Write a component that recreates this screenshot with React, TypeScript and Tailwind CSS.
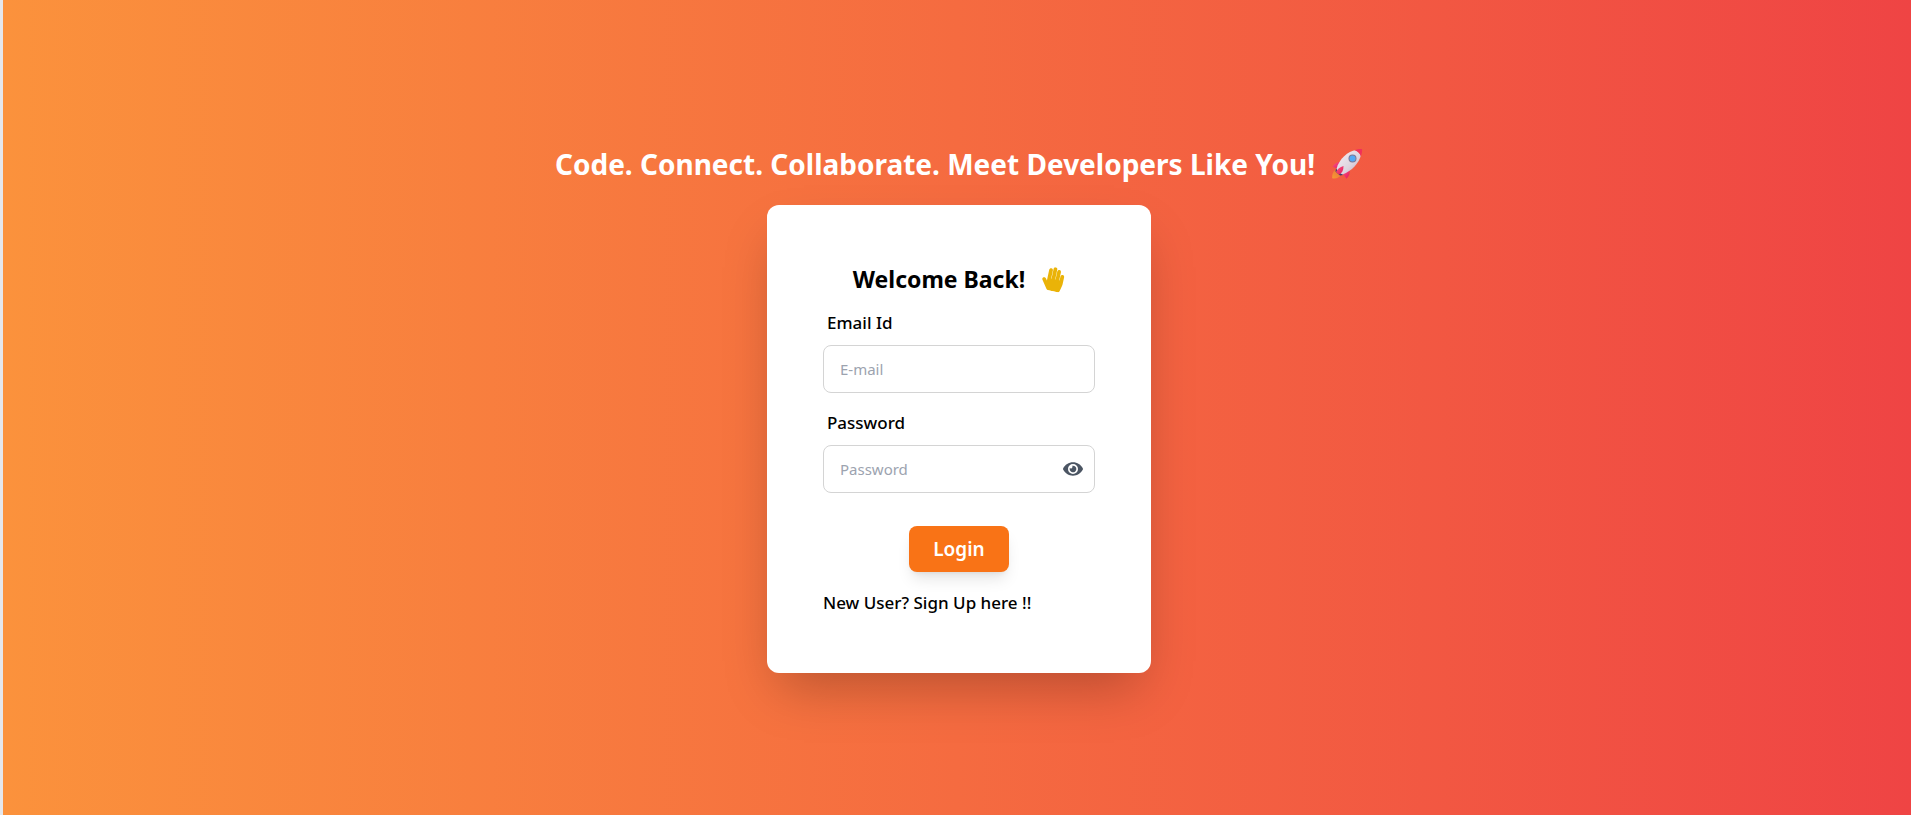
import { useState } from "react";
import type { FormEvent } from "react";
import { FaEye, FaEyeSlash, FaHandPaper } from "react-icons/fa";

function Rocket() {
  return (
    <svg viewBox="0 0 32 32" className="h-8 w-8" role="img" aria-label="Rocket">
      <defs>
        <linearGradient id="body" x1="0" y1="0" x2="1" y2="1">
          <stop offset="0" stopColor="#f6eff6" />
          <stop offset="0.6" stopColor="#ded3df" />
          <stop offset="1" stopColor="#b9a5bb" />
        </linearGradient>
        <linearGradient id="fin" x1="0" y1="0" x2="1" y2="1">
          <stop offset="0" stopColor="#fb5583" />
          <stop offset="1" stopColor="#e3165b" />
        </linearGradient>
        <linearGradient id="flame" x1="1" y1="0" x2="0" y2="1">
          <stop offset="0" stopColor="#e8703a" />
          <stop offset="1" stopColor="#f79a33" />
        </linearGradient>
      </defs>
      <path d="M4.500 21.500C2 23.500 1 26.500 1.200 30.200C4.800 30.800 8.500 30 10 26.500Z" fill="url(#flame)" />
      <path d="M11 14.200C7 13.500 3.500 15 1.500 18.700L7 20.800Z" fill="url(#fin)" />
      <path d="M18.500 21.500C19 25 18.500 28 15.500 30.700L11.500 25.500Z" fill="url(#fin)" />
      <path d="M5 20.500L4.500 23.500L9 27.500L12 27L11 22Z" fill="#3f3b69" />
      <path d="M25 2C17 3 8 11 5.500 21C7 23.500 9 25.500 11.500 26.500C21 23 28 15 30 7Z" fill="url(#body)" />
      <path d="M23.500 2.300C26 1 29 .8 31 1C31.200 3.200 31 5.500 29.800 8.500C29 5.500 27 3.300 23.500 2.300Z" fill="#f0315b" />
      <path d="M12.500 18C9 19 6.200 21 5 24L8 26.500C11 25 12.500 22.500 12.500 18Z" fill="url(#fin)" />
      <circle cx="21.500" cy="10.500" r="4" fill="#7e7795" />
      <circle cx="21.500" cy="10.500" r="3" fill="#54a9f5" />
    </svg>
  );
}

const inputClass =
  "h-12 w-full rounded-lg border border-[#d4d4d4] bg-white px-4 text-[15px] text-black placeholder:text-[#9ca3af] focus:outline-none focus:ring-2 focus:ring-[#f97316]";

export default function App() {
  const [visible, setVisible] = useState(false);
  const submit = (e: FormEvent) => e.preventDefault();

  return (
    <div className="min-h-screen border-l-3 border-[#e5e7eb] bg-linear-to-r/srgb from-[#fb923c] to-[#ef4444] pl-1 flex flex-col items-center justify-center font-['Noto_Sans',sans-serif] text-black">
      <h1 className="mb-5 flex h-[43px] items-center gap-4 text-[28px] font-bold text-white">
        Code. Connect. Collaborate. Meet Developers Like You!
        <Rocket />
      </h1>
      <main className="w-full max-w-sm rounded-xl bg-white p-14 shadow-[0_25px_50px_-12px_rgba(0,0,0,0.25)]">
        <form onSubmit={submit} className="flex flex-col">
          <h2 className="flex h-9 items-center justify-center gap-4 text-[23px] font-bold">
            Welcome Back!
            <FaHandPaper className="h-6 w-6 rotate-12 text-[#eab308]" aria-hidden="true" />
          </h2>
          <label htmlFor="email" className="mt-3 px-1 text-[17px] leading-7 font-medium">
            Email Id
          </label>
          <input id="email" type="email" placeholder="E-mail" className={`mt-2 ${inputClass}`} />
          <label htmlFor="password" className="mt-4 px-1 text-[17px] leading-7 font-medium">
            Password
          </label>
          <div className="relative mt-2">
            <input id="password" type={visible ? "text" : "password"} placeholder="Password" className={inputClass} />
            <button
              type="button"
              aria-label={visible ? "Hide password" : "Show password"}
              onClick={() => setVisible(!visible)}
              className="absolute inset-y-0 right-3 flex items-center text-[#4b5563]"
            >
              {visible ? <FaEyeSlash size={20} /> : <FaEye size={20} />}
            </button>
          </div>
          <button
            type="submit"
            className="mt-[33px] self-center rounded-lg bg-[#f97316] px-6 py-2 text-[19px] leading-[30px] font-semibold text-white shadow-lg"
          >
            Login
          </button>
          <a href="#signup" className="mt-[17px] text-[17px] leading-7 font-medium">
            New User? Sign Up here !!
          </a>
        </form>
      </main>
    </div>
  );
}
